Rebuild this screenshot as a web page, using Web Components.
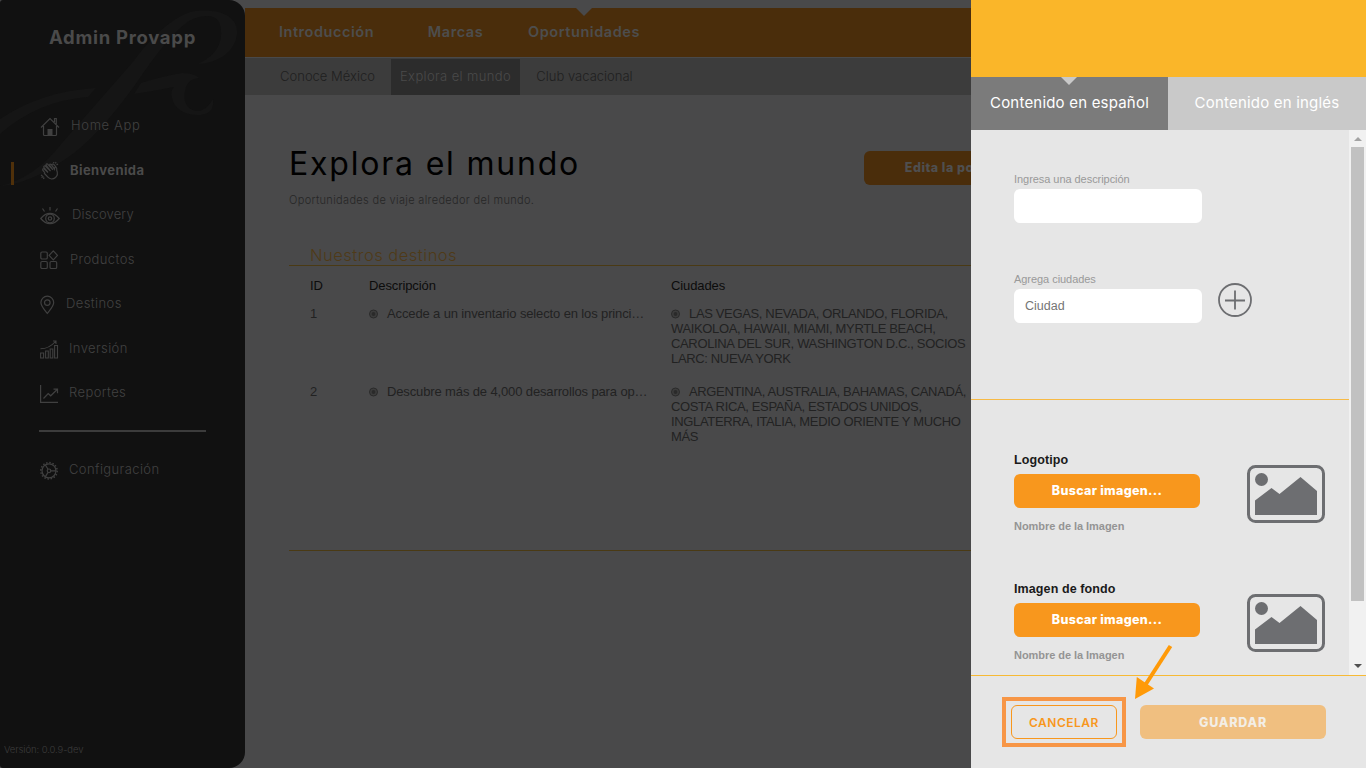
<!DOCTYPE html>
<html lang="es">
<head>
<meta charset="utf-8">
<title>Admin Provapp</title>
<style>
  body {
    margin: 0;
    width: 1366px;
    height: 768px;
    overflow: hidden;
    background: #49494a;
    font-family: Inter, "Liberation Sans", sans-serif;
  }
</style>
</head>
<body>
<provapp-shell>
  <side-bar slot="side" heading="Admin Provapp" version="Versión: 0.0.9-dev">
    <nav-item icon="home" gap="11" style="--ls:.65px">Home App</nav-item>
    <nav-item icon="hands" gap="10" active style="--ls:.4px">Bienvenida</nav-item>
    <nav-item icon="eye" gap="12" style="--ls:.15px">Discovery</nav-item>
    <nav-item icon="grid" gap="10">Productos</nav-item>
    <nav-item icon="pin" gap="6">Destinos</nav-item>
    <nav-item icon="bars" gap="9">Inversión</nav-item>
    <nav-item icon="trend" gap="9">Reportes</nav-item>
    <nav-item slot="bottom" icon="gear" gap="9">Configuración</nav-item>
  </side-bar>

  <top-menu slot="menu">
    <menu-link style="margin-left:34px;width:95px">Introducción</menu-link>
    <menu-link style="margin-left:55px;width:53px">Marcas</menu-link>
    <menu-link style="margin-left:46px;width:112px" active>Oportunidades</menu-link>
    <sub-link slot="sub" style="margin:0 6px 0 25px;width:115px">Conoce México</sub-link>
    <sub-link slot="sub" style="width:129px" active>Explora el mundo</sub-link>
    <sub-link slot="sub" style="width:129px">Club vacacional</sub-link>
  </top-menu>

  <page-intro heading="Explora el mundo" text="Oportunidades de viaje alrededor del mundo.">
    <app-button dim>Edita la portada</app-button>
  </page-intro>
  <destination-table heading="Nuestros destinos">
    <destination-row num="1" text="Accede a un inventario selecto en los princi…">LAS VEGAS, NEVADA, ORLANDO, FLORIDA,<br>WAIKOLOA, HAWAII, MIAMI, MYRTLE BEACH,<br>CAROLINA DEL SUR, WASHINGTON D.C., SOCIOS<br>LARC: NUEVA YORK</destination-row>
    <destination-row num="2" text="Descubre más de 4,000 desarrollos para op…">ARGENTINA, AUSTRALIA, BAHAMAS, CANADÁ,<br>COSTA RICA, ESPAÑA, ESTADOS UNIDOS,<br>INGLATERRA, ITALIA, MEDIO ORIENTE Y MUCHO<br>MÁS</destination-row>
  </destination-table>

  <edit-drawer slot="drawer">
    <text-field label="Ingresa una descripción"></text-field>
    <text-field label="Agrega ciudades" value="Ciudad" addable></text-field>
    <image-picker slot="images" label="Logotipo"></image-picker>
    <image-picker slot="images" label="Imagen de fondo"></image-picker>
    <app-button slot="actions" outline>CANCELAR</app-button>
    <app-button slot="actions" disabled>GUARDAR</app-button>
  </edit-drawer>
</provapp-shell>

<script>
const icons = {
  home: '<path d="M1 10.500 10 1.500 19 10.500M3.500 9v8.500q0 1 1 1h11q1 0 1-1V9M14.500 5V1.500h1.800V7"/><path d="M7.500 12h5v6.500h-5z" fill="currentColor" stroke="none"/>',
  hands: '<path d="M5 12 2.800 9.200q-.5-1.700 1-1.600L8 11.500 3.800 6.300q-.2-1.600 1.300-1.400L10.500 10 6 4q.1-1.500 1.600-1l5.300 5.800L9.500 4q.3-1.500 1.700-.6l3.300 4.800q.2-2.500 1.500-2 1 .4.800 3.300c1 2.500.7 5.200-1.300 7-2.400 2-5.700 1.800-7.600-.3L4 12M12 3.500q1-1.200 2.200.4l2.300 3M1 14l1.500 1M1.500 16.500l2-1M3.500 18l.6-1.500M13.500 1l.5 1M16 1l-.5 1.500M18 3l-1.500 1"/>',
  eye: '<path d="M.8 12.500Q5 7.300 10 7.300t9.200 5.200Q15 17.700 10 17.700T.8 12.500zM10 1v3.500M2.500 2.500l2 3M17.500 2.500l-2 3"/><circle cx="10" cy="12.500" r="4.300"/><circle cx="10" cy="12.500" r="1.700"/>',
  grid: '<rect x=".8" y="2" width="6.500" height="7" rx="1.300"/><rect x=".8" y="11.500" width="6.500" height="7" rx="1.300"/><rect x="10" y="11.500" width="6.700" height="7" rx="1.300"/><path d="m13.300.9 4.200 4.500-4.200 4.500-4.200-4.500z" stroke-linejoin="round"/>',
  pin: '<path d="M7.300 18.300C4.500 14.800.9 11.500.9 7.600a6.400 6.400 0 0 1 12.800 0c0 3.900-3.600 7.200-6.400 10.700z"/><circle cx="7.300" cy="7.600" r="2.800"/>',
  bars: '<path d="M.6 14h3v5h-3zM5.600 12h2.700v7H5.600zM10.200 10h2.600v9h-2.600zM14.600 6.500h2.900V19h-2.900zM.5 9.800Q9 9.800 15.500 2.500M13 2h3v3" stroke-width="1.100"/>',
  trend: '<path d="M.6 1v17.400H18M3.500 14.500l4.700-5 2.500 2.300 6.700-6.500M13.500 5.200h4v4"/>',
  gear: '<circle cx="9" cy="9.800" r="7"/><circle cx="9" cy="9.800" r="8.200" stroke-dasharray="1.500 1.720" stroke-width="1.500"/><circle cx="9" cy="9.800" r="1.800"/><path d="M10.800 9.800H16M8 8.200 5.400 4M8 11.400l-2.600 4.200"/>'
};

// Small base: renders the markup returned by view() into an open root
class Base extends HTMLElement {
  connectedCallback() {
    if (this.shadowRoot) return;
    this.attachShadow({ mode: "open" }).innerHTML = this.view();
  }
  attr(name) { return this.getAttribute(name) || ""; }
}

customElements.define("provapp-shell", class extends Base {
  view() {
    return `<style>
      :host { display: flex; position: relative; width: 1366px; height: 768px; overflow: hidden; }
      main { flex: 1; min-width: 0; padding-top: 8px; }
    </style>
    <slot name="side"></slot>
    <main><slot name="menu"></slot><slot></slot></main>
    <slot name="drawer"></slot>`;
  }
});

customElements.define("side-bar", class extends Base {
  view() {
    return `<style>
      :host { display: flex; flex-direction: column; position: relative; width: 245px; height: 768px;
        background: #111; border-radius: 3px 16px 16px 3px; overflow: hidden; }
      .mark { position: absolute; left: 0; top: 0; }
      h1 { margin: 25px 0 0 49px; font-size: 18.500px; line-height: 24px; font-weight: 700; letter-spacing: .7px; color: #4a4a4a; }
      h1, nav, hr, footer { position: relative; white-space: nowrap; }
      nav { display: flex; flex-direction: column; }
      .top { margin-top: 54px; }
      hr { box-sizing: border-box; width: 167px; height: 2px; margin: 15.500px 0 0 39px; border: 0; background: #3c3c3c; }
      .bottom { margin-top: 15px; }
      footer { margin: auto 0 11px 4px; font-size: 9.500px; line-height: 15px; color: #3c3c3c; font-weight: 300; letter-spacing: -.1px; }
    </style>
    <svg class="mark" width="245" height="200" fill="#151515">
      <path d="M0 186Q35 178 62 143L132 63Q162 22 190 12C216 7 239 15 237 34C235 52 218 63 198 64Q223 52 221 30C220 14 207 14 193 19Q174 27 135 85Q96 139 67 158Q30 184 0 186z"/>
      <path d="M0 119Q42 91 96 88L88 97Q37 101 0 134zM141 83Q163 76 182 73Q194 73 199 78Q187 79 185 91C182 105 191 112 200 111Q208 108 213 99Q215 113 201 115C184 116 174 108 172 98Q170 91 174 87Q154 91 134 94z"/>
    </svg>
    <h1>${this.attr("heading")}</h1>
    <nav class="top"><slot></slot></nav>
    <hr>
    <nav class="bottom"><slot name="bottom"></slot></nav>
    <footer>${this.attr("version")}</footer>`;
  }
});

customElements.define("nav-item", class extends Base {
  view() {
    return `<style>
      :host { display: flex; align-items: center; height: 44.500px; font-size: 13px; font-weight: 300; color: #414141; letter-spacing: var(--ls, .4px); }
      :host([active]) { font-weight: 700; color: #4a4a4a; }
      i { width: 3px; height: 23px; margin: 8px 26px 0 11px; }
      :host([active]) i { background: #4f300a; }
      svg { width: 20px; height: 20px; margin-top: 3px; fill: none; stroke: currentColor; stroke-width: 1.200; color: #404040; }
      span { margin-left: ${this.attr("gap")}px; line-height: 18px; }
    </style>
    <i></i><svg viewBox="0 0 20 20">${icons[this.attr("icon")]}</svg><span><slot></slot></span>`;
  }
});

customElements.define("top-menu", class extends Base {
  view() {
    return `<style>
      :host { display: block; }
      div { display: flex; }
      .main { height: 49px; background: #4a2d0b; }
      .sub { height: 37px; margin-top: 1px; background: #3c3c3c; }
    </style>
    <div class="main"><slot></slot></div>
    <div class="sub"><slot name="sub"></slot></div>`;
  }
});

customElements.define("menu-link", class extends Base {
  view() {
    return `<style>
      :host { display: flex; position: relative; justify-content: center; font-size: 14.500px; line-height: 48px;
        font-weight: 600; letter-spacing: .55px; white-space: nowrap; color: #4d4d4e; }
      :host([active])::before { content: ""; position: absolute; left: 48px; top: 0; border: 8px solid transparent; border-top-color: #49494a; border-bottom: 0; }
    </style><slot></slot>`;
  }
});

customElements.define("sub-link", class extends Base {
  view() {
    return `<style>
      :host { display: flex; justify-content: center; font-size: 13px; line-height: 36px; font-weight: 300;
        white-space: nowrap; color: #202020; }
      :host([active]) { margin-top: 1px; line-height: 34px; letter-spacing: .37px; background: #2c2c2c; color: #4a4a4a; }
    </style><slot></slot>`;
  }
});

customElements.define("page-intro", class extends Base {
  view() {
    return `<style>
      :host { display: flex; justify-content: space-between; width: 761px; margin: 51px 0 0 44px; height: 94px; }
      h2 { margin: 0; font-size: 32px; line-height: 36px; font-weight: 400; letter-spacing: 1.800px; color: #000; }
      p { margin: 10px 0 0; font-size: 11px; line-height: 16px; font-weight: 300; letter-spacing: .33px; color: #262626; }
      aside { margin-top: 5px; }
    </style>
    <div><h2>${this.attr("heading")}</h2><p>${this.attr("text")}</p></div>
    <aside><slot></slot></aside>`;
  }
});

customElements.define("app-button", class extends Base {
  view() {
    return `<style>
      :host { display: block; }
      button { display: block; box-sizing: border-box; width: 186px; height: 34px; padding: 0; border: 0; border-radius: 6px;
        background: #f8971d; color: #fff; font: 800 12.500px/34px Inter, sans-serif; letter-spacing: .3px; }
      :host([dim]) button { background: #4a2d0b; color: #4f4f50; letter-spacing: .5px; }
      :host([outline]) button { width: 106px; border: 1px solid #f8971d; padding-top: 1px; line-height: 32px; font-weight: 600; font-size: 12px; letter-spacing: .5px; background: none; color: #f8971d; }
      :host([disabled]) button { padding-top: 1px; letter-spacing: .8px; background: #f0bf80; color: #f3eee6; }
    </style><button><slot></slot></button>`;
  }
});

customElements.define("destination-table", class extends Base {
  view() {
    return `<style>
      :host { display: block; width: 1032px; height: 310px; margin-left: 44px; border-bottom: 1px solid #4a3a14; }
      h3 { margin: 0; padding-left: 21px; height: 25px; font-size: 16.500px; line-height: 31px; font-weight: 300; letter-spacing: .5px; color: #4f3a17; border-bottom: 1px solid #4a3a14; }
      .head { display: grid; grid-template-columns: 59px 302px 1fr; padding-left: 21px; height: 40px; font: 13px/39px "Liberation Sans", sans-serif; color: #0c0c0c; letter-spacing: -.1px; }
    </style>
    <h3>${this.attr("heading")}</h3>
    <div class="head"><span>ID</span><span>Descripción</span><span>Ciudades</span></div>
    <slot></slot>`;
  }
});

customElements.define("destination-row", class extends Base {
  view() {
    return `<style>
      :host { display: grid; grid-template-columns: 59px 302px 320px; padding-left: 21px; height: 78px;
        font: 13px/15px "Liberation Sans", sans-serif; letter-spacing: -.13px; color: #222; white-space: nowrap; }
      svg { width: 10px; height: 10px; margin-right: 8px; vertical-align: -1px; }
      .cities { letter-spacing: -.35px; }
    </style>
    <span>${this.attr("num")}</span>
    <span>${this.dot}${this.attr("text")}</span>
    <span class="cities">${this.dot}<slot></slot></span>`;
  }
  get dot() {
    return '<svg viewBox="0 0 10 10"><circle cx="4.500" cy="5" r="4" fill="#3c3c3c" stroke="#2a2a2a"/><circle cx="4.500" cy="5" r="1.900" fill="#2a2a2a"/></svg>';
  }
});

customElements.define("edit-drawer", class extends Base {
  view() {
    return `<style>
      :host { display: flex; flex-direction: column; position: absolute; right: 0; top: 0; width: 395px; height: 768px; background: #e6e6e6; }
      .banner { height: 77px; background: #fab629; }
      .tabs { display: flex; height: 53px; font: 400 15px/52px Inter, sans-serif; letter-spacing: .2px; color: #fff; text-align: center; white-space: nowrap; }
      .tabs span { width: 198px; background: #c9c9c9; }
      .tabs .on { position: relative; width: 197px; background: #7b7b7b; }
      .on::before { content: ""; position: absolute; left: 90px; top: 0; border: 8px solid transparent; border-top-color: #c9c9c9; border-bottom: 0; }
      .body { display: flex; height: 545px; }
      .content { flex: 1; overflow: hidden; }
      .fields { display: flex; flex-direction: column; gap: 50px; box-sizing: border-box; height: 270px; padding: 43px 0 0 43px; border-bottom: 1px solid #f7ba45; }
      .images { display: flex; flex-direction: column; gap: 33px; padding: 50px 0 0 43px; }
      .scroll { display: flex; flex-direction: column; align-items: center; width: 17px; background: #f1f1f1; }
      .scroll b { width: 13px; height: 454px; background: #c1c1c1; }
      .scroll i { width: 0; border: 4px solid transparent; border-top: 0; border-bottom-color: #a3a3a3; margin: 7px 0 6px; }
      .scroll i.down { margin: auto 0 7px; border-top: 4px solid #505050; border-bottom: 0; }
      footer { display: flex; gap: 23px; height: 63px; padding: 29px 0 0 40px; border-top: 1px solid #f7ba35; }
      .note { position: absolute; left: 31px; top: 640px; }
    </style>
    <div class="banner"></div>
    <div class="tabs"><span class="on">Contenido en español</span><span>Contenido en inglés</span></div>
    <div class="body">
      <div class="content">
        <div class="fields"><slot></slot></div>
        <div class="images"><slot name="images"></slot></div>
      </div>
      <div class="scroll"><i></i><b></b><i class="down"></i></div>
    </div>
    <footer><slot name="actions"></slot></footer>
    <svg class="note" width="180" height="110" fill="none">
      <rect x="2" y="59" width="120" height="46" stroke="#f79646" stroke-width="4"/>
      <path d="M168.500 6 142 47" stroke="#ff9a08" stroke-width="4"/>
      <path d="M133 59 134.800 37 152 48.500z" fill="#ff9a08"/>
    </svg>`;
  }
});

customElements.define("text-field", class extends Base {
  view() {
    const add = '<svg width="34" height="34" fill="none" stroke="#6d6e71" stroke-width="1.800"><circle cx="17" cy="17" r="16"/><path d="M17 7.500v19M7 17.500h20"/></svg>';
    return `<style>
      :host { display: block; height: 50px; font-family: "Liberation Sans", sans-serif; }
      label { display: block; font-size: 11px; line-height: 13px; padding-bottom: 3px; letter-spacing: -.05px; color: #999; }
      div { display: flex; gap: 16px; }
      .box { box-sizing: border-box; width: 188px; height: 34px; padding-left: 11px; border-radius: 6px; background: #fff; font-size: 12.500px; line-height: 34px; color: #757575; }
      svg { margin-top: -6px; }
    </style>
    <label>${this.attr("label")}</label>
    <div><span class="box">${this.attr("value")}</span>${this.hasAttribute("addable") ? add : ""}</div>`;
  }
});

customElements.define("image-picker", class extends Base {
  view() {
    return `<style>
      :host { display: flex; gap: 47px; height: 96px; font-family: "Liberation Sans", sans-serif; }
      h4 { margin: 2px 0 6px; font-size: 12.500px; line-height: 16px; font-weight: 700; letter-spacing: .1px; color: #1a1a1a; }
      p { margin: 11px 0 0; font-size: 11px; line-height: 14px; font-weight: 700; letter-spacing: -.05px; color: #949494; }
      svg { margin-top: 15px; }
    </style>
    <div><h4>${this.attr("label")}</h4><app-button>Buscar imagen...</app-button><p>Nombre de la Imagen</p></div>
    <svg width="78" height="58" fill="#6d6e71">
      <rect x="1.500" y="1.500" width="75" height="55" rx="7" fill="none" stroke="#6d6e71" stroke-width="3"/>
      <circle cx="14.500" cy="14.500" r="6.500"/>
      <path d="M8 35.500 24.500 23l8 6L53.500 12 70 26v24H8z"/>
    </svg>`;
  }
});
</script>
</body>
</html>
